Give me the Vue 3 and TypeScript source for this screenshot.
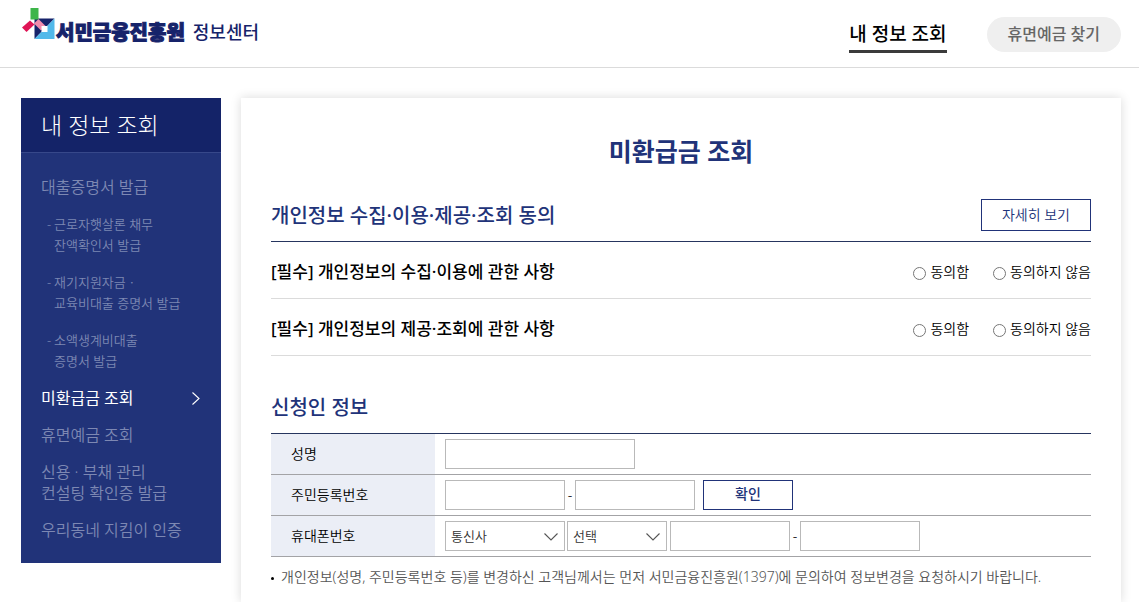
<script setup lang="ts">
import { ref } from 'vue'

interface MenuItem {
  lines: string[]
  sub?: boolean
  active?: boolean
}

interface Consent {
  id: string
  title: string
}

const menu: MenuItem[] = [
  { lines: ['대출증명서 발급'] },
  { lines: ['근로자햇살론 채무', '잔액확인서 발급'], sub: true },
  { lines: ['재기지원자금ㆍ', '교육비대출 증명서 발급'], sub: true },
  { lines: ['소액생계비대출', '증명서 발급'], sub: true },
  { lines: ['미환급금 조회'], active: true },
  { lines: ['휴면예금 조회'] },
  { lines: ['신용 · 부채 관리', '컨설팅 확인증 발급'] },
  { lines: ['우리동네 지킴이 인증'] },
]

const consents: Consent[] = [
  { id: 'collect', title: '[필수] 개인정보의 수집·이용에 관한 사항' },
  { id: 'provide', title: '[필수] 개인정보의 제공·조회에 관한 사항' },
]

const answers = ref<Record<string, string>>({ collect: '', provide: '' })
const name = ref('')
const idFront = ref('')
const idBack = ref('')
const carrier = ref('')
const prefix = ref('')
const phoneMid = ref('')
const phoneEnd = ref('')
</script>

<template>
  <div class="page">
    <header class="header">
      <a class="brand" href="#">
        <svg class="brand-mark" viewBox="0 0 34 34" width="34" height="34" aria-hidden="true">
          <path d="M12.500 11.500 H32.500 L12.500 32 Z" fill="#16236a" />
          <path d="M32.500 11.500 V32 H12.500 Z" fill="#52b9ea" />
          <path d="M12 16.500 L16.500 12 L23.500 19 L19 23.500 Z" fill="#f18bad" />
          <path d="M19.500 19 H25.500 V25 H19.500 Z" fill="#fff" />
          <path d="M0 20.500 L8 13.500 L12.500 17.500 L4.500 25 Z" fill="#df1455" />
          <rect x="8.500" y="1" width="8" height="11.500" fill="#3db54a" />
        </svg>
        <span class="brand-name">서민금융진흥원</span>
        <span class="brand-sub">정보센터</span>
      </a>
      <nav class="top-nav">
        <a class="top-link" href="#">내 정보 조회</a>
        <a class="top-pill" href="#">휴면예금 찾기</a>
      </nav>
    </header>

    <div class="body">
      <aside class="side">
        <h2 class="side-title">내 정보 조회</h2>
        <ul class="menu">
          <li v-for="item in menu" :key="item.lines[0]">
            <a href="#" class="menu-link" :class="{ sub: item.sub, active: item.active }">
              <span v-if="item.sub" class="dash">-</span>
              <span class="menu-text">
                <span v-for="line in item.lines" :key="line" class="line">{{ line }}</span>
              </span>
              <svg v-if="item.active" class="arrow" viewBox="0 0 10 14" width="10" height="14" aria-hidden="true">
                <path d="M1.500 0.500 L8 6.500 L1.500 12.500" fill="none" stroke="#fff" stroke-width="1.100" />
              </svg>
            </a>
          </li>
        </ul>
      </aside>

      <main class="card">
        <h1 class="page-title">미환급금 조회</h1>

        <section>
          <div class="section-head">
            <h2 class="section-title">개인정보 수집·이용·제공·조회 동의</h2>
            <button type="button" class="btn detail">자세히 보기</button>
          </div>
          <div v-for="c in consents" :key="c.id" class="consent">
            <h3 :id="c.id" class="consent-title">{{ c.title }}</h3>
            <div class="choices" role="radiogroup" :aria-labelledby="c.id">
              <label class="choice"><input v-model="answers[c.id]" type="radio" :name="'agree-' + c.id" value="Y" />동의함</label>
              <label class="choice"><input v-model="answers[c.id]" type="radio" :name="'agree-' + c.id" value="N" />동의하지 않음</label>
            </div>
          </div>
        </section>

        <section class="applicant">
          <div class="section-head">
            <h2 class="section-title">신청인 정보</h2>
          </div>
          <table class="form">
            <tbody>
              <tr>
                <th scope="row"><label for="name">성명</label></th>
                <td><div class="fields"><input id="name" v-model="name" class="box wide" type="text" /></div></td>
              </tr>
              <tr>
                <th scope="row"><label for="id-front">주민등록번호</label></th>
                <td>
                  <div class="fields">
                    <input id="id-front" v-model="idFront" class="box" type="text" maxlength="6" />
                    <span class="hyphen">-</span>
                    <input v-model="idBack" class="box" type="password" maxlength="7" aria-label="주민등록번호 뒷자리" />
                    <button type="button" class="btn confirm">확인</button>
                  </div>
                </td>
              </tr>
              <tr>
                <th scope="row"><label for="carrier">휴대폰번호</label></th>
                <td>
                  <div class="fields">
                    <span class="picker">
                      <select id="carrier" v-model="carrier" class="box">
                        <option value="">통신사</option>
                      </select>
                      <svg class="caret" viewBox="0 0 14 8" width="14" height="8" aria-hidden="true"><path d="M0.500 0.500 L7 7 L13.500 0.500" fill="none" stroke="#555" stroke-width="1.100" /></svg>
                    </span>
                    <span class="picker second">
                      <select v-model="prefix" class="box short" aria-label="휴대폰번호 앞자리">
                        <option value="">선택</option>
                      </select>
                      <svg class="caret" viewBox="0 0 14 8" width="14" height="8" aria-hidden="true"><path d="M0.500 0.500 L7 7 L13.500 0.500" fill="none" stroke="#555" stroke-width="1.100" /></svg>
                    </span>
                    <input v-model="phoneMid" class="box" type="text" maxlength="4" aria-label="휴대폰번호 가운데자리" />
                    <span class="hyphen">-</span>
                    <input v-model="phoneEnd" class="box" type="text" maxlength="4" aria-label="휴대폰번호 뒷자리" />
                  </div>
                </td>
              </tr>
            </tbody>
          </table>
          <p class="note">개인정보(성명, 주민등록번호 등)를 변경하신 고객님께서는 먼저 서민금융진흥원(1397)에 문의하여 정보변경을 요청하시기 바랍니다.</p>
        </section>
      </main>
    </div>
  </div>
</template>

<style>
body {
  margin: 0;
  background: #fff;
}
</style>

<style scoped>
.page {
  display: flex;
  flex-direction: column;
  min-height: 100vh;
  color: #000;
  font-family: "Noto Sans", "Noto Sans CJK KR", sans-serif;
  font-size: 14px;
  font-weight: 350;
  line-height: 21px;
}
.page * {
  box-sizing: border-box;
}
h1, h2, h3, p, ul {
  margin: 0;
  padding: 0;
}
ul {
  list-style: none;
}
a {
  color: inherit;
  text-decoration: none;
}
.header {
  display: flex;
  justify-content: space-between;
  align-items: center;
  height: 68px;
  padding: 0 18px 0 22px;
  border-bottom: 1px solid #dbdbdb;
}
.brand {
  display: flex;
  align-items: center;
  color: #16236a;
  padding-bottom: 2px;
}
.brand-mark {
  margin-bottom: 18px;
}
.brand-name {
  font-size: 20px;
  font-weight: 900;
  -webkit-text-stroke: 1px #16236a;
}
.brand-sub {
  margin-left: 8px;
  font-size: 18px;
  font-weight: 500;
}
.top-nav {
  display: flex;
  align-items: center;
  gap: 40px;
  padding-top: 2px;
}
.top-link {
  padding: 4px 0 2px;
  border-bottom: 3px solid #3b3b3b;
  font-size: 19px;
  font-weight: 500;
  line-height: 27px;
}
.top-pill {
  padding: 0 21px;
  border-radius: 18px;
  background: #efefef;
  color: #666;
  font-size: 16px;
  font-weight: 500;
  line-height: 35px;
}
.body {
  display: flex;
  flex: 1;
  align-items: flex-start;
  gap: 20px;
  padding: 30px 18px 0 21px;
}
.side {
  flex: 0 0 200px;
  background: #213379;
}
.side-title {
  padding: 0 20px;
  border-bottom: 1px solid #37488a;
  background: #142368;
  color: #fff;
  font-size: 23px;
  font-weight: 300;
  line-height: 54px;
}
.menu {
  display: flex;
  flex-direction: column;
  gap: 16px;
  padding: 24px 20px 22px;
}
.menu-link {
  display: flex;
  align-items: center;
  color: #7d88b3;
  font-size: 16px;
}
.menu-link.sub {
  align-items: flex-start;
  padding-left: 6px;
  font-size: 13px;
}
.menu-link.active {
  justify-content: space-between;
  color: #fff;
  font-weight: 400;
}
.dash {
  width: 7px;
}
.line {
  display: block;
  white-space: nowrap;
}
.card {
  flex: 1;
  align-self: stretch;
  padding: 0 30px;
  background: #fff;
  box-shadow: 0 0 10px rgba(0, 0, 0, 0.15);
}
.page-title {
  padding: 35px 0 29px;
  color: #213379;
  font-size: 25px;
  font-weight: 700;
  line-height: 37px;
  text-align: center;
}
.section-head {
  display: flex;
  justify-content: space-between;
  align-items: center;
  padding-bottom: 10px;
  border-bottom: 1px solid #26355f;
}
.section-title {
  padding-top: 2px;
  color: #213379;
  font-size: 20px;
  font-weight: 500;
  line-height: 30px;
}
.btn {
  padding: 0;
  border: 1px solid #213379;
  background: #fff;
  color: #213379;
  font-family: inherit;
  font-size: 14px;
  font-weight: inherit;
}
.detail {
  height: 32px;
  padding: 0 20px 2px;
}
.consent {
  display: flex;
  justify-content: space-between;
  align-items: center;
  height: 57px;
  border-bottom: 1px solid #dbdbdb;
}
.consent-title {
  padding-top: 2px;
  font-size: 17px;
  font-weight: 500;
}
.choices {
  display: flex;
  gap: 24px;
  padding-top: 2px;
}
.choice {
  display: flex;
  align-items: center;
}
.choice input {
  width: 13px;
  height: 13px;
  margin: 5px 4px 0 0;
}
.applicant {
  padding-top: 35px;
}
.form {
  width: 100%;
  border-collapse: separate;
  border-spacing: 0;
}
.form th,
.form td {
  height: 41px;
  padding: 0 0 0 10px;
  border-bottom: 1px solid #a3a3a6;
}
.form th {
  width: 164px;
  padding: 0 0 2px 20px;
  background: #ebeef6;
  font-weight: inherit;
  text-align: left;
}
.fields {
  display: flex;
  align-items: center;
}
.box {
  width: 120px;
  height: 30px;
  margin: 0;
  padding: 0 5px;
  border: 1px solid #b9b9b9;
  border-radius: 0;
  background: #fff;
  color: #333;
  font-family: inherit;
  font-size: 13px;
  font-weight: inherit;
  appearance: none;
}
.wide {
  width: 190px;
}
.short {
  width: 100px;
}
.hyphen {
  width: 10px;
  padding-bottom: 2px;
  text-align: center;
}
.confirm {
  width: 90px;
  height: 30px;
  margin-left: 8px;
  padding-bottom: 5px;
  font-weight: 500;
}
.picker {
  position: relative;
  display: flex;
  margin-right: 2px;
}
.picker.second {
  margin-right: 3px;
}
.caret {
  position: absolute;
  top: 12px;
  right: 7px;
  pointer-events: none;
}
.note {
  position: relative;
  padding: 9px 0 14px 10px;
  color: #555;
}
.note::before {
  content: "";
  position: absolute;
  top: 20px;
  left: 0;
  width: 3px;
  height: 3px;
  border-radius: 50%;
  background: #000;
}
</style>
